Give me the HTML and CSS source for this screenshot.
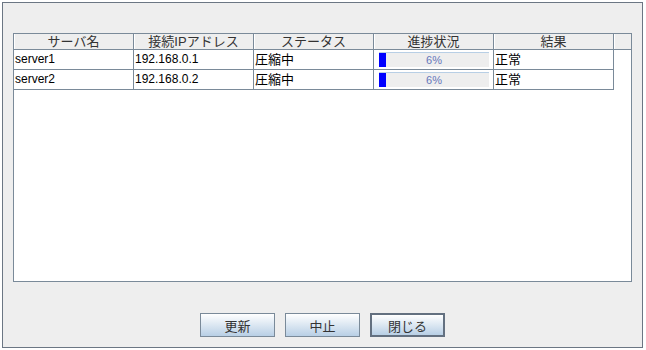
FILE: index.html
```html
<!DOCTYPE html>
<html lang="ja">
<head>
    <meta charset="UTF-8">
    <title>進捗状況</title>
    <link rel="stylesheet" href="styles.css">
</head>
<body>
    <div class="dialog">
        <div class="table-pane">
            <table class="job-table">
                <thead>
                    <tr>
                        <th>サーバ名</th>
                        <th>接続IPアドレス</th>
                        <th>ステータス</th>
                        <th>進捗状況</th>
                        <th>結果</th>
                        <th class="corner"></th>
                    </tr>
                </thead>
                <tbody>
                    <tr>
                        <td>server1</td>
                        <td>192.168.0.1</td>
                        <td class="ja">圧縮中</td>
                        <td class="progress-cell">
                            <div class="progress">
                                <div class="progress-fill" style="width: 6%"></div>
                                <span class="progress-text">6%</span>
                            </div>
                        </td>
                        <td class="ja">正常</td>
                        <td class="empty"></td>
                    </tr>
                    <tr>
                        <td>server2</td>
                        <td>192.168.0.2</td>
                        <td class="ja">圧縮中</td>
                        <td class="progress-cell">
                            <div class="progress">
                                <div class="progress-fill" style="width: 6%"></div>
                                <span class="progress-text">6%</span>
                            </div>
                        </td>
                        <td class="ja">正常</td>
                        <td class="empty"></td>
                    </tr>
                </tbody>
            </table>
        </div>
        <div class="buttons">
            <button class="btn">更新</button>
            <button class="btn">中止</button>
            <button class="btn focused">閉じる</button>
        </div>
    </div>
</body>
</html>
```

FILE: styles.css
```css
body {
    margin: 0;
    background-color: white;
    font-family: "Liberation Sans", "Noto Sans CJK JP", sans-serif;
    font-size: 12px;
    color: black;
}
.dialog {
    margin: 2px 0 0 2px;
    width: 639px;
    height: 344px;
    border: 1px solid #6b7683;
    background-color: #eeeeee;
    padding: 30px 10px 0 10px;
    box-sizing: content-box;
    width: 619px;
    height: 314px;
}
.table-pane {
    height: 247px;
    border: 1px solid #7a8a99;
    background-color: white;
}
.job-table {
    border-collapse: separate;
    border-spacing: 0;
    table-layout: fixed;
    width: 617px;
}
.job-table th {
    width: 119px;
    height: 15px;
    padding: 0;
    background-color: #eeeeee;
    border-right: 1px solid #7a8a99;
    border-bottom: 1px solid #7a8a99;
    box-shadow: inset 1px 0 0 white;
    font-weight: normal;
    font-size: 13px;
    line-height: 15px;
    color: #333333;
    text-align: center;
}
.job-table th.corner {
    width: auto;
    border-right: none;
}
.job-table td {
    height: 19px;
    padding: 0 0 0 1px;
    border-right: 1px solid #7a8a99;
    border-bottom: 1px solid #7a8a99;
    line-height: 19px;
    white-space: nowrap;
}
.job-table td.ja {
    font-size: 13px;
}
.job-table td.empty {
    border: none;
}
.job-table td.progress-cell {
    padding: 0 4px 0 5px;
}
.progress {
    position: relative;
    height: 14px;
    border-top: 1px solid #b8cfe5;
    background-color: #eeeeee;
}
.progress-fill {
    height: 14px;
    background-color: #0000ff;
}
.progress-text {
    position: absolute;
    left: 0;
    right: 0;
    top: 0;
    text-align: center;
    font-size: 11px;
    line-height: 14px;
    color: #6677bb;
}
.buttons {
    display: flex;
    justify-content: center;
    gap: 10px;
    margin-top: 31px;
}
.btn {
    width: 75px;
    height: 24px;
    padding: 0;
    border: 1px solid #7a8a99;
    background: linear-gradient(#ffffff, #b8cfe5);
    font-family: "Liberation Sans", "Noto Sans CJK JP", sans-serif;
    font-size: 13px;
    color: #333333;
}
.btn.focused {
    border: 2px solid #637080;
}
```
